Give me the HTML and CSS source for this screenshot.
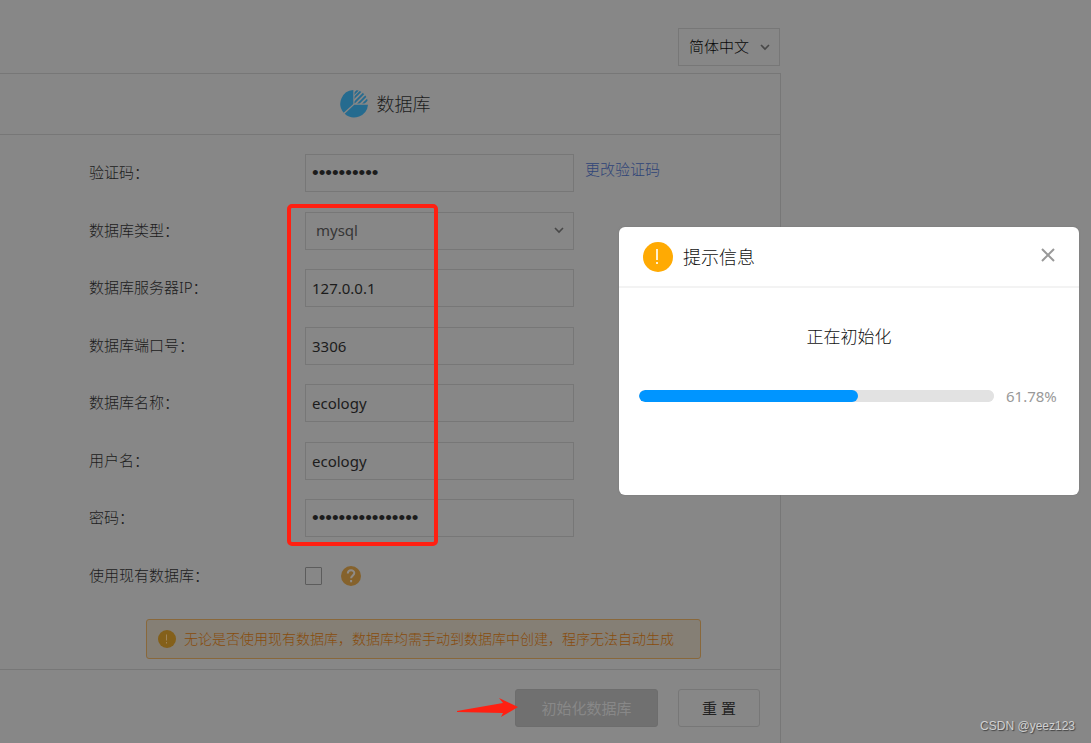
FILE: index.html
```html
<!DOCTYPE html>
<html lang="zh-CN">
<head>
<meta charset="utf-8">
<title>数据库</title>
<link rel="stylesheet" href="styles.css">
</head>
<body>
<main class="setup">
  <header class="topbar">
    <div class="select-wrap language">
      <select class="select" aria-label="语言"><option>简体中文</option></select>
      <svg class="chevron" viewBox="0 0 10 7"><path d="M1 1l4 4 4-4"/></svg>
    </div>
  </header>
  <form class="panel">
    <div class="panel-head">
      <svg class="logo" viewBox="0 0 28 28">
        <defs><clipPath id="slice"><path d="M14.500 0A13.500 13.500 0 0 1 28 13.500H14.500z"/></clipPath></defs>
        <path class="logo-fill" d="M13.300 0v14L3.700 22.800A13.800 13.800 0 0 1 13.300 0z"/>
        <path class="logo-fill" d="M14.300 14.800H28A14 14 0 0 1 4.700 23.800z"/>
        <g clip-path="url(#slice)"><path class="logo-line" d="M12 6l8-8M12 10L24-2M13 14L28-1M17 15L30 2M22 15l8-8"/></g>
      </svg>
      <h1 class="panel-title">数据库</h1>
    </div>
    <div class="rows">
      <label class="label" for="code">验证码：</label>
      <div class="cell"><input class="input secret" id="code" type="password" value="abcdefghij"><a class="link" href="#">更改验证码</a></div>
      <label class="label" for="type">数据库类型：</label>
      <div class="cell">
        <div class="select-wrap field">
          <select class="select" id="type"><option>mysql</option></select>
          <svg class="chevron" viewBox="0 0 10 7"><path d="M1 1l4 4 4-4"/></svg>
        </div>
      </div>
      <label class="label" for="ip">数据库服务器IP：</label>
      <div class="cell"><input class="input" id="ip" type="text" value="127.0.0.1"></div>
      <label class="label" for="port">数据库端口号：</label>
      <div class="cell"><input class="input" id="port" type="text" value="3306"></div>
      <label class="label" for="name">数据库名称：</label>
      <div class="cell"><input class="input" id="name" type="text" value="ecology"></div>
      <label class="label" for="user">用户名：</label>
      <div class="cell"><input class="input" id="user" type="text" value="ecology"></div>
      <label class="label" for="pass">密码：</label>
      <div class="cell"><input class="input secret" id="pass" type="password" value="abcdefghijklmnop"></div>
      <label class="label" for="exist">使用现有数据库：</label>
      <div class="cell">
        <input class="check" id="exist" type="checkbox">
        <svg class="help" viewBox="0 0 20 20"><circle cx="10" cy="10" r="10"/><path d="M6.800 7.500c0-4.300 6.500-4.300 6.500-.4 0 2.500-3.200 2.600-3.200 5.200M10.100 14v2.200"/></svg>
      </div>
      <div class="highlight"></div>
    </div>
    <div class="notice">
      <svg class="notice-icon" viewBox="0 0 18 18"><circle cx="9" cy="9" r="9"/><path d="M8.500 4.500v6M8.500 12v1.500"/></svg>
      <span>无论是否使用现有数据库，数据库均需手动到数据库中创建，程序无法自动生成</span>
    </div>
    <footer class="actions">
      <div class="primary-wrap">
        <button class="button primary" type="button" disabled>初始化数据库</button>
        <svg class="arrow" viewBox="0 0 62 20"><path d="M0 13L46 5 42 0 61 9 44 19 46 15 0 14z"/></svg>
      </div>
      <button class="button" type="reset">重 置</button>
    </footer>
  </form>
</main>
<section class="dialog" role="dialog" aria-labelledby="dialog-title">
  <header class="dialog-head">
    <svg class="dialog-icon" viewBox="0 0 30 30"><circle cx="15" cy="15" r="15"/><path d="M14 7v11M14 20v2"/></svg>
    <h2 class="dialog-title" id="dialog-title">提示信息</h2>
    <button class="close" type="button" aria-label="关闭"><svg class="close-icon" viewBox="0 0 14 14"><path d="M1 1l12 12M13 1L1 13"/></svg></button>
  </header>
  <div class="dialog-body">
    <label class="status" for="progress">正在初始化</label>
    <div class="progress-row">
      <progress class="progress" id="progress" value="61.78" max="100"></progress>
      <span class="percent">61.78%</span>
    </div>
  </div>
</section>
<div class="watermark">CSDN @yeez123</div>
</body>
</html>
```
FILE: styles.css
```css
* { box-sizing: border-box; }

body {
  margin: 0;
  min-height: 100vh;
  position: relative;
  background: #878787;
  color: #1c1c1c;
  font: 15px/20px "Noto Sans", "Noto Sans CJK SC", sans-serif;
  overflow: hidden;
}

svg { display: block; flex: none; }

.setup {
  max-width: 781px;
  min-height: 100vh;
  display: flex;
  flex-direction: column;
}

.topbar {
  display: flex;
  justify-content: flex-end;
  padding: 28px 1px 7px 0;
}

.select-wrap { display: grid; align-items: center; }
.select-wrap > * { grid-area: 1 / 1; }
.language { width: 102px; color: #080808; }
.field { width: 269px; color: #363636; }

.select {
  appearance: none;
  width: 100%;
  height: 38px;
  padding: 0 10px 2px;
  border: 1px solid #777;
  border-radius: 0;
  background: transparent;
  color: inherit;
  font: inherit;
}

.language .select { font-weight: 300; }

.chevron {
  width: 10px;
  height: 7px;
  margin-right: 10px;
  justify-self: end;
  fill: none;
  stroke: #484848;
  stroke-width: 1.6;
  pointer-events: none;
}

.panel {
  flex: 1;
  border: 1px solid #777;
  border-width: 1px 1px 0 0;
}

.panel-head {
  display: flex;
  align-items: center;
  justify-content: center;
  gap: 9px;
  height: 61px;
  padding-right: 10px;
  border-bottom: 1px solid #777;
}

.logo { width: 28px; height: 28px; }
.logo-fill { fill: #256b8f; }
.logo-line { fill: none; stroke: #256b8f; stroke-width: 1.8; }
.panel-title { margin: 0; font-size: 18px; line-height: 24px; font-weight: 300; }

.rows {
  position: relative;
  display: grid;
  grid-template-columns: 216px minmax(0, 1fr);
  grid-auto-rows: 38px;
  align-content: space-between;
  align-items: center;
  min-height: 441px;
  margin: 19px 0 0 89px;
}

.label { padding-bottom: 2px; font-weight: 300; }
.cell { display: flex; align-items: center; }

.input {
  width: 269px;
  height: 38px;
  padding: 0 6px;
  border: 1px solid #777;
  background: transparent;
  color: #1c1c1c;
  font: inherit;
}

.secret { font: 19px "Liberation Sans", sans-serif; }

.link {
  margin-left: 11px;
  padding-bottom: 8px;
  color: #2f4478;
  font-weight: 300;
  text-decoration: none;
}

.check {
  appearance: none;
  width: 17px;
  height: 18px;
  margin: 0;
  border: 1px solid #5c5c5c;
  border-radius: 1px;
}

.help { width: 20px; height: 20px; margin-left: 19px; fill: #85622c; }
.help path { fill: none; stroke: #8f8b86; stroke-width: 2; }

.highlight {
  position: absolute;
  top: 50px;
  left: 198px;
  width: 151px;
  height: 342px;
  border: 4px solid #ff2012;
  border-radius: 5px;
  pointer-events: none;
}

.notice {
  display: flex;
  align-items: center;
  gap: 8px;
  width: 555px;
  min-height: 40px;
  margin: 24px 79px 10px auto;
  padding-left: 11px;
  border: 1px solid #89683b;
  border-radius: 3px;
  background: #857f75;
  color: #884c0c;
  font-size: 14px;
  font-weight: 300;
}

.notice-icon { width: 18px; height: 18px; fill: #84601a; }
.notice-icon path { fill: none; stroke: #a0845a; stroke-width: 1; }

.actions {
  display: flex;
  justify-content: flex-end;
  gap: 20px;
  padding: 19px 20px 16px;
  border-top: 1px solid #777;
}

.primary-wrap { position: relative; }

.button {
  min-width: 82px;
  height: 38px;
  padding: 0;
  border: 1px solid #777;
  border-radius: 3px;
  background: transparent;
  color: #222;
  font: inherit;
}

.primary {
  width: 143px;
  border-color: #6d6d6d;
  background: #707070;
  color: #888;
}

.arrow {
  position: absolute;
  top: 9px;
  left: -58px;
  width: 62px;
  height: 20px;
  fill: #ff2012;
}

.dialog {
  position: absolute;
  top: 227px;
  right: 12px;
  width: 460px;
  min-height: 268px;
  border-radius: 6px;
  background: #fff;
  color: #111;
  box-shadow: 0 0 2px #777;
}

.dialog-head {
  display: flex;
  align-items: center;
  gap: 10px;
  height: 61px;
  padding: 0 24px;
  border-bottom: 2px solid #f3f3f3;
}

.dialog-icon { width: 30px; height: 30px; fill: #ffaa03; }
.dialog-icon path { fill: none; stroke: #fff0cf; stroke-width: 2; }
.dialog-title { margin: 0; font-size: 18px; line-height: 24px; font-weight: 300; }
.close { margin-left: auto; padding: 0 0 4px; border: 0; background: none; }
.close-icon { width: 14px; height: 14px; fill: none; stroke: #999; stroke-width: 2; }
.dialog-body { padding: 36px 20px 20px; }
.status { display: block; font-size: 17px; line-height: 26px; font-weight: 300; text-align: center; }

.progress-row {
  display: flex;
  align-items: center;
  gap: 12px;
  margin-top: 36px;
}

.progress {
  appearance: none;
  flex: 1;
  min-width: 0;
  height: 12px;
  border: 0;
  border-radius: 6px;
  background: #e2e2e2;
  overflow: hidden;
}

.progress::-webkit-progress-bar { border-radius: 6px; background: #e2e2e2; }
.progress::-webkit-progress-value { border-radius: 6px; background: #0095ff; }
.percent { min-width: 53px; color: #999; }

.watermark {
  position: absolute;
  right: 16px;
  bottom: 10px;
  color: #d0d0d0;
  font: 12px/14px "Liberation Sans", sans-serif;
  text-shadow: 1px 1px 1px #444;
}
```
